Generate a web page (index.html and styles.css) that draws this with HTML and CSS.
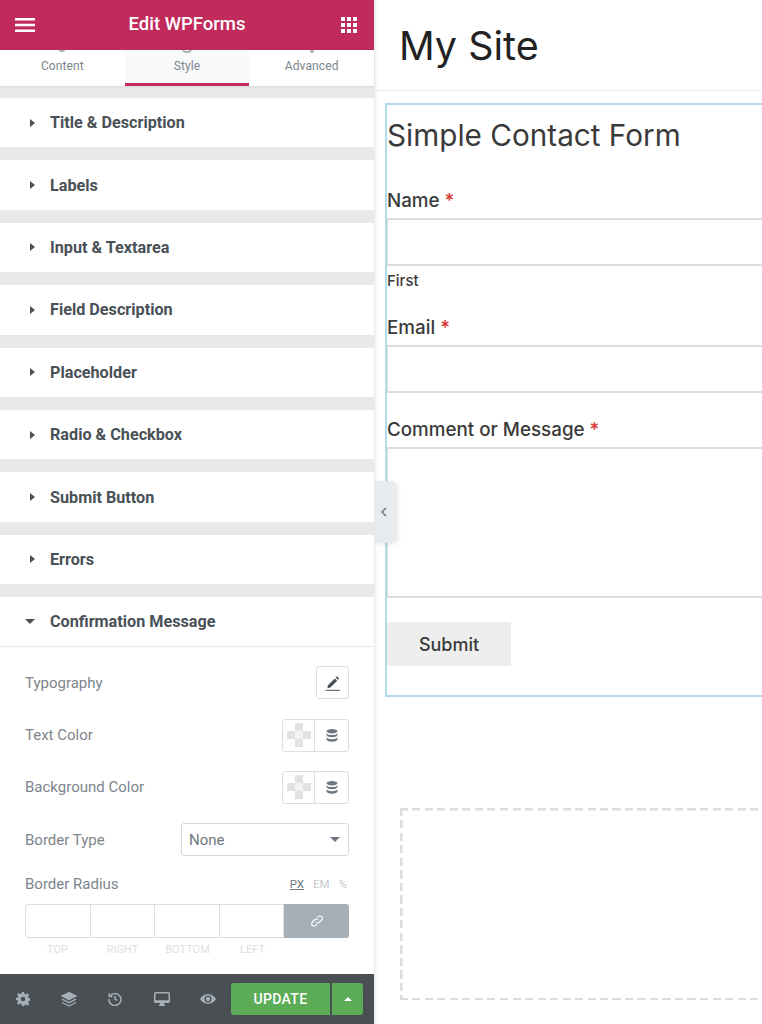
FILE: index.html
```html
<!DOCTYPE html>
<html lang="en">
<head>
<meta charset="utf-8">
<title>Edit WPForms</title>
<link rel="stylesheet" href="styles.css">
</head>
<body>
<div class="app">
<aside class="panel">
  <header class="panel-head">
    <svg class="head-icon" width="20" height="14" viewBox="0 0 20 14"><path d="M0 1.200h20M0 7h20M0 12.800h20" stroke="#fff" stroke-width="2.400"/></svg>
    <span class="head-title">Edit WPForms</span>
    <svg class="head-icon" width="16" height="16" viewBox="0 0 16 16" fill="#fff"><rect width="4" height="4"/><rect x="6" width="4" height="4"/><rect x="12" width="4" height="4"/><rect y="6" width="4" height="4"/><rect x="6" y="6" width="4" height="4"/><rect x="12" y="6" width="4" height="4"/><rect y="12" width="4" height="4"/><rect x="6" y="12" width="4" height="4"/><rect x="12" y="12" width="4" height="4"/></svg>
  </header>
  <nav class="tabs">
    <div class="tab"><i class="peek peek-small"></i>Content</div>
    <div class="tab tab-active"><i class="peek"></i>Style</div>
    <div class="tab"><i class="peek peek-dot"></i>Advanced</div>
  </nav>
  <div class="sections">
    <div class="section"><i class="caret"></i>Title &amp; Description</div>
    <div class="section"><i class="caret"></i>Labels</div>
    <div class="section"><i class="caret"></i>Input &amp; Textarea</div>
    <div class="section"><i class="caret"></i>Field Description</div>
    <div class="section"><i class="caret"></i>Placeholder</div>
    <div class="section"><i class="caret"></i>Radio &amp; Checkbox</div>
    <div class="section"><i class="caret"></i>Submit Button</div>
    <div class="section"><i class="caret"></i>Errors</div>
    <div class="section section-open"><i class="caret caret-open"></i>Confirmation Message</div>
  </div>
  <div class="controls">
    <div class="row">
      <span>Typography</span>
      <span class="btn-box">
        <svg width="18" height="18" viewBox="0 0 18 18"><path d="M4 11.200 10.800 4.400l2.400 2.400-6.800 6.800-3 .6z" fill="#495157"/><path d="M11.700 3.500l1.200-1.200 2.300 2.300-1.200 1.200z" fill="#495157"/><path d="M1.500 16.300h14.500" stroke="#495157" stroke-width="1"/></svg>
      </span>
    </div>
    <div class="row">
      <span>Text Color</span>
      <span class="color-group">
        <span class="swatch"><svg width="24" height="24" viewBox="0 0 24 24" fill="#e0e2e4"><rect x="8" y="0" width="8" height="8"/><rect x="0" y="8" width="8" height="8"/><rect x="16" y="8" width="8" height="8"/><rect x="8" y="16" width="8" height="8"/><rect x="8" y="8" width="8" height="8" fill="#f1f2f3"/></svg></span>
        <span class="dyn"><svg width="12" height="13" viewBox="0 0 12 13" fill="#6d7882"><ellipse cx="6" cy="2.200" rx="5.500" ry="2.200"/><path d="M.5 4.200c1 1.400 3 1.900 5.500 1.900s4.500-.5 5.500-1.900v2c-.6 1.300-3 2-5.500 2s-4.900-.7-5.500-2z"/><path d="M.5 8.300c1 1.400 3 1.900 5.500 1.900s4.500-.5 5.500-1.900v2.400c-.6 1.300-3 2-5.500 2s-4.900-.7-5.500-2z"/></svg></span>
      </span>
    </div>
    <div class="row">
      <span>Background Color</span>
      <span class="color-group">
        <span class="swatch"><svg width="24" height="24" viewBox="0 0 24 24" fill="#e0e2e4"><rect x="8" y="0" width="8" height="8"/><rect x="0" y="8" width="8" height="8"/><rect x="16" y="8" width="8" height="8"/><rect x="8" y="16" width="8" height="8"/><rect x="8" y="8" width="8" height="8" fill="#f1f2f3"/></svg></span>
        <span class="dyn"><svg width="12" height="13" viewBox="0 0 12 13" fill="#6d7882"><ellipse cx="6" cy="2.200" rx="5.500" ry="2.200"/><path d="M.5 4.200c1 1.400 3 1.900 5.500 1.900s4.500-.5 5.500-1.900v2c-.6 1.300-3 2-5.500 2s-4.900-.7-5.500-2z"/><path d="M.5 8.300c1 1.400 3 1.900 5.500 1.900s4.500-.5 5.500-1.900v2.400c-.6 1.300-3 2-5.500 2s-4.900-.7-5.500-2z"/></svg></span>
      </span>
    </div>
    <div class="row">
      <span>Border Type</span>
      <span class="select">None<i class="select-arrow"></i></span>
    </div>
    <div class="radius-head">
      <span>Border Radius</span>
      <span class="units"><u class="unit-on">PX</u><span>EM</span><span>%</span></span>
    </div>
    <div class="dims">
      <span class="dim"></span><span class="dim"></span><span class="dim"></span><span class="dim"></span>
      <span class="dim-link"><svg width="14" height="14" viewBox="0 0 14 14" fill="none" stroke="#fff" stroke-width="1.200"><path d="M6 8.300a2.300 2.300 0 0 0 3.300 0l2.300-2.300a2.300 2.300 0 0 0-3.300-3.300L7.300 3.700"/><path d="M8 5.700a2.300 2.300 0 0 0-3.300 0L2.400 8a2.300 2.300 0 0 0 3.300 3.300l1-1"/></svg></span>
    </div>
    <div class="dim-labels"><span>TOP</span><span>RIGHT</span><span>BOTTOM</span><span>LEFT</span></div>
  </div>
  <footer class="panel-foot">
    <svg class="tool tool-gear" width="14" height="14" viewBox="0 0 24 24" fill="#a4afb7"><path fill-rule="evenodd" d="M10 0h4l.6 3.400 2.300.9 2.800-2 2.800 2.800-2 2.800.9 2.300 3.600.8v4l-3.400.6-.9 2.300 2 2.800-2.800 2.800-2.800-2-2.300.9L14 24h-4l-.6-3.400-2.300-.9-2.800 2-2.800-2.800 2-2.800-.9-2.300L-.4 14v-4l3.400-.6.9-2.300-2-2.800 2.800-2.800 2.800 2 2.300-.9zM12 8a4 4 0 1 0 0 8 4 4 0 0 0 0-8z"/></svg>
    <svg class="tool tool-layers" width="16" height="15" viewBox="0 0 16 15" fill="none" stroke="#a4afb7" stroke-width="1.300"><path d="M8 .6l7 3.500-7 3.500-7-3.500z" fill="#a4afb7"/><path d="M1 7.200l7 3.500 7-3.500M1 10.500l7 3.500 7-3.500"/></svg>
    <svg class="tool tool-history" width="14" height="14" viewBox="0 0 14 14" fill="none" stroke="#a4afb7" stroke-width="1.500"><path d="M2 4.200A6 6 0 1 1 1 7"/><path d="M1.200 1.200v3.300h3.300" stroke-width="1.300"/><path d="M7 3.800V7l2.200 1.400"/></svg>
    <svg class="tool tool-desktop" width="16" height="14" viewBox="0 0 16 14"><path fill="#a4afb7" d="M1.500 0h13A1.500 1.500 0 0 1 16 1.500v8a1.500 1.500 0 0 1-1.500 1.500H10v1.500h1V14H5v-1.500h1V11H1.500A1.500 1.500 0 0 1 0 9.500v-8A1.500 1.500 0 0 1 1.500 0zm0 1.500v6.800h13V1.500z"/></svg>
    <svg class="tool tool-eye" width="16" height="10" viewBox="0 0 16 10"><path fill="#a4afb7" fill-rule="evenodd" d="M8 0c3.500 0 6.300 2.200 8 5-1.700 2.800-4.500 5-8 5S1.700 7.800 0 5c1.700-2.800 4.500-5 8-5zm0 1.500a3.500 3.500 0 1 0 0 7 3.500 3.500 0 0 0 0-7z"/><circle cx="8" cy="5" r="2.200" fill="#a4afb7"/></svg>
    <span class="update-group">
      <span class="update">UPDATE</span>
      <span class="update-more"><i class="caret-up"></i></span>
    </span>
  </footer>
</aside>
<main class="site">
  <div class="site-head"><h1 class="site-title">My Site</h1></div>
  <section class="form-wrap">
    <h2 class="form-title">Simple Contact Form</h2>
    <label class="field-label label-name">Name <em>*</em></label>
    <div class="input"></div>
    <div class="sublabel">First</div>
    <label class="field-label label-email">Email <em>*</em></label>
    <div class="input"></div>
    <label class="field-label label-msg">Comment or Message <em>*</em></label>
    <div class="textarea"></div>
    <div class="submit">Submit</div>
  </section>
  <div class="dropzone"></div>
</main>
<div class="collapse"><svg width="8" height="12" viewBox="0 0 8 12" fill="none" stroke="#6d7882" stroke-width="1.500"><path d="M6 2 2 6l4 4"/></svg></div>
</div>
</body>
</html>
```
FILE: styles.css
```css
* { box-sizing: border-box; }
html, body { margin: 0; height: 100%; overflow: hidden; background: #fff; }
.app { display: flex; width: 762px; height: 1024px; position: relative; overflow: hidden; font-family: Roboto, sans-serif; }

.panel { width: 374px; height: 1024px; flex: none; display: flex; flex-direction: column; background: #fff; box-shadow: 1px 0 3px rgba(0,0,0,.12); position: relative; }
.panel-head { height: 50px; flex: none; background: #c02b5c; color: #fff; display: flex; align-items: center; justify-content: space-between; padding: 0 17px 0 15px; position: relative; z-index: 2; }
.head-title { font-size: 18.500px; font-weight: 500; margin: 0 2px 3px 0; }
.head-icon { flex: none; }

.tabs { height: 36px; flex: none; display: flex; background: #fff; box-shadow: 0 1px 2px rgba(0,0,0,.08); position: relative; z-index: 1; }
.tab { flex: 1; position: relative; text-align: center; font-size: 12px; line-height: 14px; padding-top: 8.500px; color: #7d858c; letter-spacing: .1px; }
.tab-active { background: #f8f9f9; border-bottom: 3px solid #c02b5c; }
.peek { position: absolute; left: 50%; top: -4px; width: 10px; height: 7px; margin-left: -5px; border: 2px solid #a4afb7; border-radius: 50%; border-top: 0; }
.peek-small { width: 6px; margin-left: -3px; top: -3px; height: 5px; }
.peek-dot { width: 4px; height: 4px; margin-left: -2px; top: -1px; background: #a4afb7; border: 0; }

.sections { background: #e7e9ea; padding-top: 12px; flex: none; }
.section { height: 49.400px; margin-bottom: 13px; background: #fff; display: flex; align-items: center; padding-left: 30px; font-size: 16.200px; font-weight: 700; color: #495157; }
.section-open { margin-bottom: 0; height: 50px; padding-left: 25px; border-bottom: 1px solid #e7e9ea; }
.caret { width: 0; height: 0; margin-right: 15px; border-left: 5px solid #495157; border-top: 4.500px solid transparent; border-bottom: 4.500px solid transparent; }
.caret-open { margin-right: 15px; border-top: 5px solid #495157; border-left: 5px solid transparent; border-right: 5px solid transparent; border-bottom: 0; }

.controls { flex: 1; padding: 19px 25px 0; font-size: 15px; color: #7d858c; }
.row { height: 33px; margin-bottom: 19.400px; display: flex; align-items: center; justify-content: space-between; }
.btn-box { width: 33px; height: 33px; border: 1px solid #dcdfe2; border-radius: 3px; display: flex; align-items: center; justify-content: center; }
.color-group { width: 67px; height: 33px; border: 1px solid #dcdfe2; border-radius: 3px; display: flex; }
.swatch { width: 32px; display: flex; align-items: center; justify-content: center; border-right: 1px solid #dcdfe2; }
.dyn { flex: 1; display: flex; align-items: center; justify-content: center; }
.select { width: 168px; height: 33px; border: 1px solid #d5dadf; border-radius: 3px; display: flex; align-items: center; justify-content: space-between; padding: 0 7px; color: #6d7882; }
.select-arrow { width: 0; height: 0; margin-right: 1px; border-top: 5px solid #6d7882; border-left: 5px solid transparent; border-right: 5px solid transparent; }
.radius-head { display: flex; justify-content: space-between; align-items: center; height: 16px; margin-top: .400px; }
.units { display: flex; gap: 9px; font-size: 11.500px; color: #c3c9ce; margin-right: 2px; }
.unit-on { color: #6d7882; }
.dims { display: flex; height: 34px; margin-top: 12px; border: 1px solid #dcdfe2; border-radius: 3px; }
.dim { width: 64.500px; border-right: 1px solid #dcdfe2; }
.dim-link { flex: 1; margin: -1px -1px -1px 0; background: #a4afb7; border-radius: 0 3px 3px 0; display: flex; align-items: center; justify-content: center; }
.dim-labels { display: flex; margin-top: 5px; font-size: 11px; line-height: 13px; color: #dcdfe2; }
.dim-labels span { width: 65px; text-align: center; }

.panel-foot { height: 50px; flex: none; background: #4a4f54; display: flex; align-items: center; padding-left: 16px; }
.tool { flex: none; }
.tool-layers { margin-left: 31px; }
.tool-history { margin-left: 31px; }
.tool-desktop { margin-left: 32px; }
.tool-eye { margin-left: 30px; }
.update-group { margin-left: 15px; display: flex; gap: 2px; height: 32px; }
.update { width: 99px; background: #5bab57; color: #fff; border-radius: 3px 0 0 3px; font-size: 14px; font-weight: 500; letter-spacing: .3px; display: flex; align-items: center; justify-content: center; }
.update-more { width: 31px; background: #5bab57; border-radius: 0 3px 3px 0; display: flex; align-items: center; justify-content: center; }
.caret-up { width: 0; height: 0; border-bottom: 4.500px solid #fff; border-left: 4.500px solid transparent; border-right: 4.500px solid transparent; }

.site { flex: 1; min-width: 0; font-family: Inter, sans-serif; color: #3a3a3a; padding-left: 11px; }
.site-head { height: 91px; margin-left: -11px; padding: 4px 0 0 25px; border-bottom: 1px solid #ececec; display: flex; align-items: center; }
.site-title { margin: 0; font-size: 39.500px; font-weight: 400; color: #222; line-height: 1; }
.form-wrap { margin-top: 12px; width: 400px; height: 594px; border: 2px solid #b2dcea; padding-top: 11px; }
.form-title { margin: 0 0 35px; font-size: 29.700px; font-weight: 400; line-height: 38px; color: #3a3a3a; }
.field-label { display: block; font-size: 18.800px; font-weight: 500; line-height: 24px; }
.field-label em { font-style: normal; color: #d63638; }
.input { height: 48px; margin-top: 5px; border: 2px solid #dcdcdc; border-width: 2px 0 2px 1px; }
.sublabel { font-size: 15px; font-weight: 500; line-height: 18px; margin-top: 6px; }
.label-email { margin-top: 26px; }
.label-msg { margin-top: 25px; }
.textarea { height: 151px; margin-top: 5px; border: 2px solid #dcdcdc; border-width: 2px 0 2px 1px; }
.submit { width: 124px; height: 44px; margin-top: 24px; background: #eee; display: flex; align-items: center; justify-content: center; font-size: 18px; font-weight: 500; }
.dropzone {
  width: 400px; height: 192px; margin: 111px 0 0 14.500px;
  background:
    repeating-linear-gradient(90deg, #dadcde 0 8px, transparent 8px 12.500px) top left / 100% 2.500px no-repeat,
    repeating-linear-gradient(90deg, #dadcde 0 8px, transparent 8px 12.500px) bottom left / 100% 2.500px no-repeat,
    repeating-linear-gradient(180deg, #dadcde 0 8px, transparent 8px 12.500px) top left / 2.500px 100% no-repeat;
}

.collapse { position: absolute; left: 375px; top: 481px; width: 21px; height: 62px; background: #e8ebed; border-radius: 0 6px 6px 0; box-shadow: 2px 1px 4px rgba(0,0,0,.1); display: flex; align-items: center; padding-left: 5px; }
```
